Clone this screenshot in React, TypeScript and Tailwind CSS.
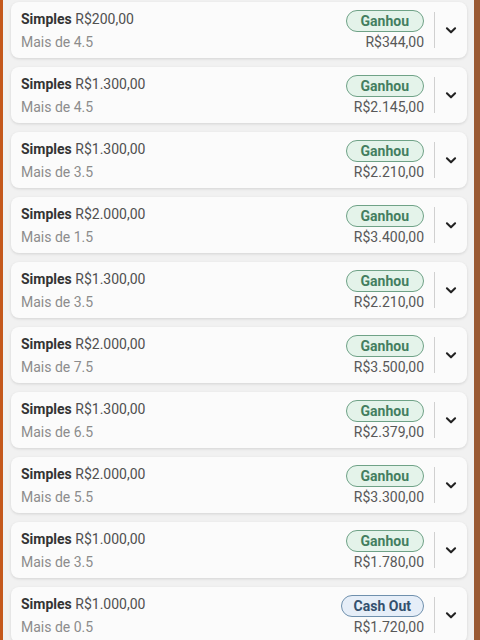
const bets = [
  { stake: "R$200,00", line: "Mais de 4.5", ret: "R$344,00", status: "Ganhou" },
  { stake: "R$1.300,00", line: "Mais de 4.5", ret: "R$2.145,00", status: "Ganhou" },
  { stake: "R$1.300,00", line: "Mais de 3.5", ret: "R$2.210,00", status: "Ganhou" },
  { stake: "R$2.000,00", line: "Mais de 1.5", ret: "R$3.400,00", status: "Ganhou" },
  { stake: "R$1.300,00", line: "Mais de 3.5", ret: "R$2.210,00", status: "Ganhou" },
  { stake: "R$2.000,00", line: "Mais de 7.5", ret: "R$3.500,00", status: "Ganhou" },
  { stake: "R$1.300,00", line: "Mais de 6.5", ret: "R$2.379,00", status: "Ganhou" },
  { stake: "R$2.000,00", line: "Mais de 5.5", ret: "R$3.300,00", status: "Ganhou" },
  { stake: "R$1.000,00", line: "Mais de 3.5", ret: "R$1.780,00", status: "Ganhou" },
  { stake: "R$1.000,00", line: "Mais de 0.5", ret: "R$1.720,00", status: "Cash Out" },
];

const Chevron = () => (
  <svg width="14" height="14" viewBox="0 0 24 24" fill="none" stroke="#222" strokeWidth="3.5" strokeLinecap="round" strokeLinejoin="round">
    <path d="M5 9l7 7 7-7" />
  </svg>
);

const BetCard = ({ stake, line, ret, status }: (typeof bets)[number]) => {
  const won = status === "Ganhou";
  return (
    <div className="flex h-[56px] shrink-0 items-stretch rounded-[8px] bg-[#fbfbfb] shadow-[0_1px_3px_rgba(0,0,0,0.12)]">
      <div className="flex flex-1 flex-col justify-center gap-[5px] pl-[10px]">
        <div className="text-[14px] leading-[18px] text-[#505050]">
          <span className="font-bold text-[#333]">Simples</span> {stake}
        </div>
        <div className="text-[14px] leading-[18px] text-[#8c8c8c]">{line}</div>
      </div>
      <div className="flex flex-col items-end justify-center gap-[1px] pr-[10px]">
        <span
          className={
            won
              ? "rounded-full border-[1.5px] border-[#6fa287] bg-[#e4f3ea] px-[14px] text-[14px] font-bold leading-[20px] text-[#437e60]"
              : "rounded-full border-[1.5px] border-[#6f90ad] bg-[#e6eef8] px-[12px] text-[14px] font-bold leading-[20px] text-[#34506e]"
          }
        >
          {status}
        </span>
        <span className="text-[14px] leading-[18px] text-[#585858]">{ret}</span>
      </div>
      <div className="my-[10px] w-px bg-[#d0d0d0]" />
      <div className="flex w-[32px] items-center justify-center">
        <Chevron />
      </div>
    </div>
  );
};

export default function App() {
  return (
    <div
      className="flex h-[640px] w-[480px] overflow-hidden bg-[#f1f1f1]"
      style={{ fontFamily: "Roboto, 'Liberation Sans', sans-serif" }}
    >
      <div className="w-[3px] shrink-0 bg-[#c4581c]" />
      <div className="flex flex-1 flex-col gap-[9px] pl-[8px] pr-[7px] pt-[2px]">
        {bets.map((b, i) => (
          <BetCard key={i} {...b} />
        ))}
      </div>
      <div className="w-[6px] shrink-0 bg-[#9a5a34]" />
    </div>
  );
}
